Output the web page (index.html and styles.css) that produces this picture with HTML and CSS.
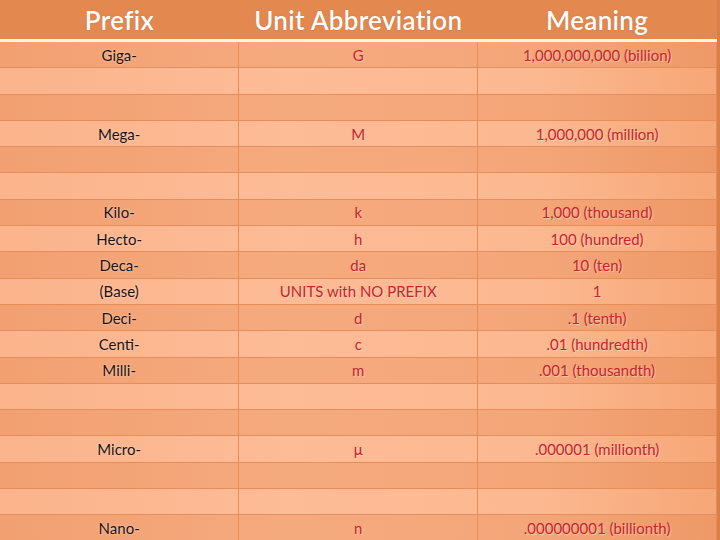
FILE: index.html
```html
<!DOCTYPE html>
<html>
<head>
<meta charset="utf-8">
<link rel="stylesheet" href="styles.css">
</head>
<body>
<div class="slide">
<table class="prefixes">
  <thead>
    <tr><th>Prefix</th><th>Unit Abbreviation</th><th>Meaning</th></tr>
  </thead>
  <tbody>
    <tr class="d"><td class="p">Giga-</td><td class="r">G</td><td class="r">1,000,000,000 (billion)</td></tr>
    <tr class="l"><td></td><td></td><td></td></tr>
    <tr class="d"><td></td><td></td><td></td></tr>
    <tr class="l"><td class="p">Mega-</td><td class="r">M</td><td class="r">1,000,000 (million)</td></tr>
    <tr class="d"><td></td><td></td><td></td></tr>
    <tr class="l"><td></td><td></td><td></td></tr>
    <tr class="d"><td class="p">Kilo-</td><td class="r">k</td><td class="r">1,000 (thousand)</td></tr>
    <tr class="l"><td class="p">Hecto-</td><td class="r">h</td><td class="r">100 (hundred)</td></tr>
    <tr class="d"><td class="p">Deca-</td><td class="r">da</td><td class="r">10 (ten)</td></tr>
    <tr class="l"><td class="p">(Base)</td><td class="r">UNITS with NO PREFIX</td><td class="r">1</td></tr>
    <tr class="d"><td class="p">Deci-</td><td class="r">d</td><td class="r">.1 (tenth)</td></tr>
    <tr class="l"><td class="p">Centi-</td><td class="r">c</td><td class="r">.01 (hundredth)</td></tr>
    <tr class="d"><td class="p">Milli-</td><td class="r">m</td><td class="r">.001 (thousandth)</td></tr>
    <tr class="l"><td></td><td></td><td></td></tr>
    <tr class="d"><td></td><td></td><td></td></tr>
    <tr class="l"><td class="p">Micro-</td><td class="r">μ</td><td class="r">.000001 (millionth)</td></tr>
    <tr class="d"><td></td><td></td><td></td></tr>
    <tr class="l"><td></td><td></td><td></td></tr>
    <tr class="d"><td class="p">Nano-</td><td class="r">n</td><td class="r">.000000001 (billionth)</td></tr>
  </tbody>
</table>
</div>
</body>
</html>
```

FILE: styles.css
```css
html, body {
  margin: 0;
  padding: 0;
  background: #d9804a;
  overflow: hidden;
}
.slide {
  width: 720px;
  height: 540px;
  overflow: hidden;
  background: #d9804a;
}
.prefixes {
  width: 717px;
  border-collapse: collapse;
  table-layout: fixed;
  font-family: Lato, "Open Sans", sans-serif;
}
.prefixes thead th {
  height: 39px;
  padding: 0;
  background: #e3884f;
  color: #ffffff;
  font-size: 26px;
  font-weight: 600;
  letter-spacing: 0.3px;
  text-align: center;
  vertical-align: middle;
  border-bottom: 3px solid #fff6ee;
  text-shadow: 0 0 1px rgba(160, 70, 20, 0.5);
}
.prefixes td {
  height: 25.3px;
  padding: 0;
  font-size: 15px;
  text-align: center;
  vertical-align: middle;
  border: 1px solid #e58e59;
  border-top: none;
  background-attachment: fixed;
}
.prefixes td:first-child { border-left: none; }
.prefixes tr.d td {
  background-image: linear-gradient(to right, #f2a072 0%, #f5aa7e 40%, #f4a679 75%, #ee9866 100%);
}
.prefixes tr.l td {
  background-image: linear-gradient(to right, #fbb48c 0%, #fdbb96 40%, #fcb890 75%, #f6a676 100%);
}
.p {
  color: #1c1010;
  text-shadow: 0 0 2px rgba(255, 230, 210, 0.9);
}
.r {
  color: #c4252c;
  text-shadow: 1px 1px 1px rgba(255, 220, 200, 0.6);
}
```
